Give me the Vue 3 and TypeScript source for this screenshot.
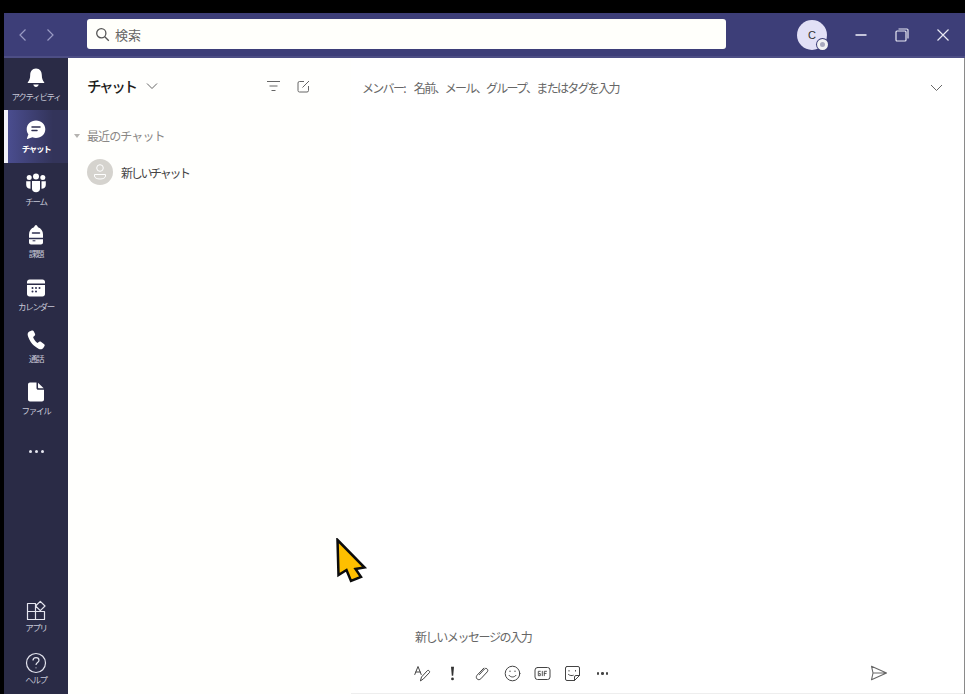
<script setup lang="ts">
const railItems = [
  { key: "bell", label: "アクティビティ" },
  { key: "chat", label: "チャット", active: true },
  { key: "team", label: "チーム" },
  { key: "task", label: "課題" },
  { key: "cal", label: "カレンダー" },
  { key: "call", label: "通話" },
  { key: "file", label: "ファイル" },
];
</script>

<template>
  <div class="screen">
    <header class="titlebar">
      <div class="nav-arrows">
        <svg width="10" height="14" viewBox="0 0 10 14"><path d="M7.5 1.5 2 7l5.5 5.5" /></svg>
        <svg width="10" height="14" viewBox="0 0 10 14"><path d="M2.5 1.5 8 7l-5.5 5.5" /></svg>
      </div>
      <div class="search">
        <svg width="15" height="15" viewBox="0 0 15 15"><circle cx="6.3" cy="6.3" r="4.6" /><path d="m9.8 9.8 4 4" /></svg>
        <span>検索</span>
      </div>
      <div class="avatar">
        C
        <span class="status"></span>
      </div>
      <div class="win-buttons">
        <svg class="win-min" width="14" height="14" viewBox="0 0 14 14"><path d="M1.5 7h11" /></svg>
        <svg width="14" height="14" viewBox="0 0 14 14"><rect x="1" y="3" width="10" height="10" rx="1" /><path d="M3.5 1h8.5a1 1 0 0 1 1 1v8.5" /></svg>
        <svg width="14" height="14" viewBox="0 0 14 14"><path d="m1.5 1.5 11 11M12.5 1.5l-11 11" /></svg>
      </div>
    </header>

    <div class="body">
      <nav class="rail">
        <a v-for="item in railItems" :key="item.key" class="rail-item" :class="{ active: item.active }">
          <svg width="22" height="22" viewBox="0 0 22 22" class="rail-icon">
            <template v-if="item.key === 'bell'">
              <path d="M11 1.5c-4 0-5.8 3-5.8 6.5 0 3.6-1 5.6-2.4 7.2-.3.4 0 .8.4.8h15.6c.4 0 .7-.4.4-.8-1.4-1.6-2.4-3.600-2.400-7.200 0-3.500-1.800-6.500-5.800-6.500Z" />
              <path d="M8.300 17.500h5.400c-.3 1.500-1.300 2.500-2.700 2.500s-2.400-1-2.700-2.500Z" />
            </template>
            <template v-else-if="item.key === 'chat'">
              <path d="M11 1.500c-5.200 0-9.300 3.800-9.300 8.700 0 1.900.6 3.600 1.700 5l-1.500 4.300c-.1.300.2.600.5.500l5-1.700c1.200.5 2.400.6 3.600.6 5.200 0 9.300-3.800 9.300-8.700S16.200 1.500 11 1.500Z" />
              <path class="cut" d="M7 8h8M7 11.500h5" />
            </template>
            <template v-else-if="item.key === 'team'">
              <circle cx="4.200" cy="5.500" r="2.500" /><circle cx="11" cy="4.500" r="3" /><circle cx="17.800" cy="5.500" r="2.500" />
              <path d="M1.200 9.200h4.300v7.500c-2.600 0-4.300-1.400-4.300-3.700ZM16.500 9.200h4.300V13c0 2.300-1.700 3.700-4.300 3.700Z" />
              <path d="M7 9h8v8c0 2-1.700 3.200-4 3.200S7 19 7 17Z" />
            </template>
            <template v-else-if="item.key === 'task'">
              <path d="M9 3.300C9.400 2 10.200 1 11 1s1.600 1 2 2.300c3 .9 5 3.700 5 7.200v8c0 1.200-.9 2-2 2H6c-1.100 0-2-.8-2-2v-8c0-3.500 2-6.300 5-7.200Z" />
              <path class="cut" d="M7.500 9h7M4 14.500h14" />
              <path class="cut thin-cut" d="M8 16.800h2" />
            </template>
            <template v-else-if="item.key === 'cal'">
              <path d="M4.500 2.500h13c1.400 0 2.500 1.100 2.500 2.500v1.500H2V5c0-1.400 1.100-2.500 2.500-2.500Z" />
              <path d="M2 8h18v9c0 1.400-1.100 2.500-2.500 2.500h-13C3.100 19.500 2 18.400 2 17Z" />
              <path class="cut dots" d="M7.500 11h.01M11 11h.01M14.500 11h.01M7.500 14.500h.01M11 14.500h.01" />
            </template>
            <template v-else-if="item.key === 'call'">
              <path d="M6.800 1.500 4.400 2.600C2.800 3.400 2.300 5 2.900 7c1.800 5.800 5.700 10.300 11 12.900 1.700.8 3.400.4 4.400-1l1.200-1.800c.4-.6.300-1.300-.3-1.800l-3.300-2.600c-.5-.4-1.200-.4-1.700 0l-1.800 1.300c-2.100-1.500-3.500-3.500-4.300-5.900l1.500-1.300c.5-.5.700-1.100.5-1.800L8.700 2.300c-.2-.7-1.200-1.100-1.900-.8Z" />
            </template>
            <template v-else>
              <path d="M5 1.500h6.500V7c0 1 .8 1.800 1.800 1.800H19V18.500c0 1.100-.9 2-2 2H5c-1.100 0-2-.9-2-2v-15c0-1.100.9-2 2-2Z" />
              <path d="M13 1.800 18.700 7.300H14c-.6 0-1-.4-1-1Z" />
            </template>
          </svg>
          <span>{{ item.label }}</span>
        </a>
        <div class="rail-more">
          <span></span><span></span><span></span>
        </div>
        <div class="rail-spacer"></div>
        <a class="rail-item bottom">
          <svg width="22" height="22" viewBox="0 0 22 22" class="rail-line">
            <path d="M2.500 3.500h8v8h-8ZM2.500 11.500v8h8v-8M10.500 11.500h9v8h-9M15.300 1.300l4.700 4.700-4.700 4.700L10.600 6Z" />
          </svg>
          <span>アプリ</span>
        </a>
        <a class="rail-item bottom">
          <svg width="22" height="22" viewBox="0 0 22 22" class="rail-line">
            <circle cx="11" cy="11" r="9.500" />
            <path d="M8 8.600c0-1.800 1.300-2.900 3-2.900s3 1 3 2.600c0 2.300-3 2.300-3 4.800" />
            <path d="M11 15.600v.6" />
          </svg>
          <span>ヘルプ</span>
        </a>
      </nav>

      <aside class="list">
        <div class="list-head">
          <h1>チャット</h1>
          <svg class="thin" width="12" height="8" viewBox="0 0 12 8"><path d="m1 1.500 5 5 5-5" /></svg>
          <div class="list-actions">
            <svg class="thin" width="15" height="12" viewBox="0 0 15 12"><path d="M1 1.500h13M3.500 6h8M5.500 10.500h4" /></svg>
            <svg class="thin" width="15" height="15" viewBox="0 0 15 15"><path d="M8 2.500H3.500a1.500 1.500 0 0 0-1.500 1.500v7.500A1.500 1.500 0 0 0 3.500 13H11a1.500 1.500 0 0 0 1.500-1.500V7M6.500 8.500 13 2" /></svg>
          </div>
        </div>
        <div class="recent"><span class="tri"></span>最近のチャット</div>
        <div class="chat-row">
          <span class="chat-avatar">
            <svg class="thin" width="16" height="18" viewBox="0 0 16 18"><circle cx="8" cy="5" r="3.300" /><path d="M2.500 11.500h11v1.500c0 2-2.500 3-5.500 3s-5.500-1-5.500-3Z" /></svg>
          </span>
          <span>新しいチャット</span>
        </div>
      </aside>

      <main class="conversation">
        <div class="members">
          <span class="members-label">メンバー:</span>
          <span class="members-hint">名前、メール、グループ、またはタグを入力</span>
          <svg class="thin" width="13" height="8" viewBox="0 0 13 8"><path d="m1 1 5.500 5.500L12 1" /></svg>
        </div>
        <div class="thread"></div>
        <div class="composer">
          <div class="placeholder">新しいメッセージの入力</div>
          <div class="tools">
            <div class="tools-left">
              <svg width="17" height="17" viewBox="0 0 17 17"><path d="M.8 9.500 4 1.500l3.200 8M1.800 7h4.400M6.500 15.500l1-3.500 6-6.500c.8-.8 2.800 1 2 2l-6 6.300Z" /></svg>
              <svg width="17" height="17" viewBox="0 0 17 17" class="solid"><path d="M7 1.800h3L9.200 10.800H7.800ZM8.500 12.500a1.300 1.300 0 1 1 0 2.800 1.300 1.300 0 0 1 0-2.800Z" /></svg>
              <svg width="17" height="17" viewBox="0 0 17 17"><path d="m5.500 9.500 5-5.500c1.700-1.800 4.500.8 2.800 2.800l-6.500 7c-2.500 2.500-6-.8-3.800-3.500l6.800-7.200" /></svg>
              <svg width="17" height="17" viewBox="0 0 17 17"><circle cx="8.500" cy="8.500" r="7.300" /><path d="M5 10.300c1.800 2.300 5.200 2.300 7 0M6 6v.6M11 6v.6" /></svg>
              <svg width="17" height="17" viewBox="0 0 17 17"><rect x="1" y="2.500" width="15" height="12" rx="2.500" /><path class="gif" d="M6.300 6.300H4.300v4.400h2V8.600H5.300M8.300 6.300v4.400M10.300 10.700V6.300h2.200M10.300 8.400h1.800" /></svg>
              <svg width="17" height="17" viewBox="0 0 17 17"><path d="M3 1.500h11a1.500 1.500 0 0 1 1.500 1.500v7.500l-5 5H3A1.500 1.500 0 0 1 1.500 14V3A1.500 1.500 0 0 1 3 1.500ZM15.500 10.500h-3.500a1.500 1.500 0 0 0-1.500 1.500v3.500M5 5.500v.6M11.500 5.500v.6M4.500 9.500c1.400 1.200 3.200 1.400 4.800.8" /></svg>
              <div class="tool-dots"><span></span><span></span><span></span></div>
            </div>
            <svg class="send" width="18" height="16" viewBox="0 0 18 16"><path d="M1.500 1.200 16.500 8l-15 6.800L3 8ZM3 8h13.500" /></svg>
          </div>
        </div>
      </main>
    </div>

    <svg class="pointer" width="32" height="46" viewBox="0 0 32 46">
      <path d="M1.500 2 28.500 29.500 19.500 31 25 39 15 43 10.500 32 2.500 37Z" />
    </svg>
  </div>
</template>

<style scoped>
.screen {
  position: relative;
  width: 965px;
  height: 694px;
  box-sizing: border-box;
  padding: 13px 0 0 4px;
  background: #000;
  overflow: hidden;
  display: flex;
  flex-direction: column;
  font-family: "Noto Sans CJK JP", "Noto Sans", sans-serif;
  color: #252423;
}

svg {
  display: block;
  flex: none;
  fill: none;
}

.titlebar {
  height: 45px;
  flex: none;
  display: flex;
  align-items: center;
  background: #3d3e78;
  border-bottom: 2px solid #4d4e85;
  box-sizing: border-box;
  color: #fff;
}

.nav-arrows {
  display: flex;
  gap: 17px;
  margin-left: 14px;
  width: 69px;
}

.nav-arrows svg path {
  stroke: #9a9bc4;
  stroke-width: 1.200;
}

.search {
  width: 639px;
  height: 30px;
  margin-top: -1px;
  background: #fffffb;
  border-radius: 3px;
  display: flex;
  align-items: center;
  gap: 5px;
  padding-left: 8px;
  box-sizing: border-box;
  font-size: 13px;
  color: #666;
}

.search svg * {
  stroke: #555;
  stroke-width: 1.300;
}

.avatar {
  position: relative;
  width: 30px;
  height: 30px;
  margin-left: 71px;
  border-radius: 50%;
  background: #e2e0f6;
  color: #333;
  font-family: "Liberation Sans", sans-serif;
  font-size: 11px;
  display: flex;
  align-items: center;
  justify-content: center;
}

.status {
  position: absolute;
  right: -1px;
  bottom: 0;
  width: 11px;
  height: 11px;
  box-sizing: border-box;
  border-radius: 50%;
  background: #a9a9bd;
  border: 3px solid #f2f2f2;
  box-shadow: 0 0 0 1px #3d3e78;
}

.win-buttons {
  display: flex;
  gap: 27px;
  margin-left: 27px;
}

.win-buttons svg * {
  stroke: #e8e8f4;
  stroke-width: 1.200;
}

.win-buttons .win-min * {
  stroke-width: 1.600;
}

.body {
  flex: 1;
  display: flex;
  min-height: 0;
  background: #fff;
  border-right: 1px solid #8a8a8a;
}

.rail {
  width: 64px;
  flex: none;
  background: #2a2b46;
  display: flex;
  flex-direction: column;
}

.rail-item {
  height: 52.400px;
  flex: none;
  box-sizing: border-box;
  padding-top: 9px;
  display: flex;
  flex-direction: column;
  align-items: center;
  gap: 1px;
  color: #c6c7d6;
  font-size: 8.500px;
  letter-spacing: -1.300px;
  line-height: 12px;
  white-space: nowrap;
}

.rail-item.active {
  background: linear-gradient(90deg, #4a4d8f, #33345a 75%);
  border-left: 4px solid #f2f2f8;
  padding-right: 4px;
  color: #fff;
  font-weight: 700;
}

.rail-item.bottom {
  height: 52px;
  padding-top: 10px;
}

.rail-item.bottom span {
  margin-top: -2px;
}

.rail-icon {
  fill: #fff;
}

.rail-icon .cut {
  fill: none;
  stroke: #2f3052;
  stroke-width: 1.500;
  stroke-linecap: round;
}

.rail-icon .thin-cut {
  stroke-width: 1;
}

.rail-icon .dots {
  stroke-width: 2;
}

.rail-line * {
  stroke: #e4e4ee;
  stroke-width: 1.200;
  stroke-linejoin: round;
}

.rail-more {
  display: flex;
  justify-content: center;
  gap: 3px;
  margin-top: 25px;
}

.rail-more span {
  width: 3px;
  height: 3px;
  border-radius: 50%;
  background: #e6e6f0;
}

.rail-spacer {
  flex: 1;
}

.list {
  width: 283px;
  flex: none;
  display: flex;
  flex-direction: column;
  background: #fffffd;
}

.list-head {
  height: 56px;
  display: flex;
  align-items: center;
  padding: 0 40px 0 19px;
  flex: none;
}

.list-head h1 {
  margin: 0 10px 2px 0;
  font-size: 14.500px;
  letter-spacing: -2.300px;
  font-weight: 500;
  color: #1c1b1a;
}

.thin * {
  stroke: #666;
  stroke-width: 1;
}

.list-actions {
  margin-left: auto;
  display: flex;
  align-items: center;
  gap: 15px;
}

.recent {
  margin-top: 13px;
  padding-left: 6px;
  display: flex;
  align-items: center;
  font-size: 12px;
  letter-spacing: -0.900px;
  line-height: 18px;
  color: #8a8886;
}

.tri {
  width: 0;
  height: 0;
  margin-right: 7px;
  border-left: 3px solid transparent;
  border-right: 3px solid transparent;
  border-top: 4px solid #b5b3b0;
}

.chat-row {
  height: 36px;
  margin-top: 9px;
  display: flex;
  align-items: center;
  gap: 8px;
  padding-left: 19px;
  font-size: 12px;
  letter-spacing: -2.300px;
  color: #444;
}

.chat-avatar {
  width: 26px;
  height: 26px;
  border-radius: 50%;
  background: #d5d3ce;
  display: flex;
  align-items: center;
  justify-content: center;
}

.chat-avatar svg * {
  stroke: #fff;
}

.conversation {
  flex: 1;
  min-width: 0;
  display: flex;
  flex-direction: column;
}

.members {
  height: 59px;
  flex: none;
  display: flex;
  align-items: center;
  padding: 0 21px 0 11px;
  font-size: 12px;
  letter-spacing: -1.700px;
  color: #666;
}

.members-hint {
  margin-left: 9px;
}

.members svg {
  margin-left: auto;
}

.thread {
  flex: 1;
}

.composer {
  padding: 0 76px 0 63px;
  border-bottom: 1px solid #eeeeee;
}

.placeholder {
  margin-left: 1px;
  font-size: 12px;
  letter-spacing: -1.400px;
  line-height: 18px;
  color: #666;
}

.tools {
  height: 28px;
  margin-top: 19px;
  display: flex;
  align-items: flex-start;
  justify-content: space-between;
}

.tools-left {
  display: flex;
  align-items: center;
  gap: 13px;
}

.tools-left svg * {
  stroke: #444;
  stroke-width: 1;
  stroke-linecap: round;
  stroke-linejoin: round;
}

.tools-left svg.solid * {
  fill: #333;
  stroke: none;
}

.tools-left .gif {
  stroke-width: 0.900;
}

.tool-dots {
  display: flex;
  gap: 2px;
  width: 17px;
  justify-content: center;
}

.tool-dots span {
  width: 2.500px;
  height: 2.500px;
  border-radius: 50%;
  background: #444;
}

.send * {
  stroke: #666;
  stroke-width: 1.100;
  stroke-linejoin: round;
}

.pointer {
  position: absolute;
  left: 336px;
  top: 538px;
}

.pointer path {
  fill: #ffbf00;
  stroke: #0c0c0c;
  stroke-width: 2.500;
}
</style>

<style>
html,
body {
  margin: 0;
  background: #000;
}
</style>
